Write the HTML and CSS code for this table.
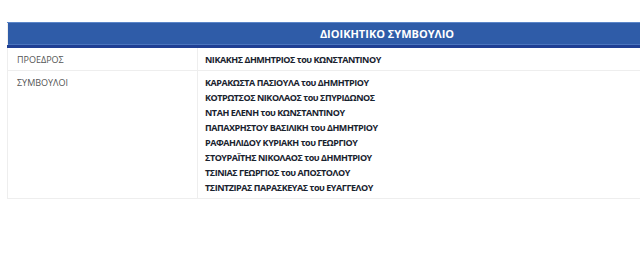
FILE: index.html
```html
<!DOCTYPE html>
<html>
<head>
  <meta charset="UTF-8">
  <title>Διοικητικό Συμβούλιο</title>
  <link rel="stylesheet" href="styles.css">
</head>
<body>
  <table class="board">
    <thead>
      <tr>
        <th colspan="2">ΔΙΟΙΚΗΤΙΚΟ ΣΥΜΒΟΥΛΙΟ</th>
      </tr>
    </thead>
    <tbody>
      <!-- Πρόεδρος -->
      <tr>
        <td class="role">ΠΡΟΕΔΡΟΣ</td>
        <td class="names">
          <div>ΝΙΚΑΚΗΣ ΔΗΜΗΤΡΙΟΣ του ΚΩΝΣΤΑΝΤΙΝΟΥ</div>
        </td>
      </tr>
      <!-- Σύμβουλοι -->
      <tr>
        <td class="role">ΣΥΜΒΟΥΛΟΙ</td>
        <td class="names">
          <div>ΚΑΡΑΚΩΣΤΑ ΠΑΣΙΟΥΛΑ του ΔΗΜΗΤΡΙΟΥ</div>
          <div>ΚΟΤΡΩΤΣΟΣ ΝΙΚΟΛΑΟΣ του ΣΠΥΡΙΔΩΝΟΣ</div>
          <div>ΝΤΑΗ ΕΛΕΝΗ του ΚΩΝΣΤΑΝΤΙΝΟΥ</div>
          <div>ΠΑΠΑΧΡΗΣΤΟΥ ΒΑΣΙΛΙΚΗ του ΔΗΜΗΤΡΙΟΥ</div>
          <div>ΡΑΦΑΗΛΙΔΟΥ ΚΥΡΙΑΚΗ του ΓΕΩΡΓΙΟΥ</div>
          <div>ΣΤΟΥΡΑΪΤΗΣ ΝΙΚΟΛΑΟΣ του ΔΗΜΗΤΡΙΟΥ</div>
          <div>ΤΣΙΝΙΑΣ ΓΕΩΡΓΙΟΣ του ΑΠΟΣΤΟΛΟΥ</div>
          <div>ΤΣΙΝΤΖΙΡΑΣ ΠΑΡΑΣΚΕΥΑΣ του ΕΥΑΓΓΕΛΟΥ</div>
        </td>
      </tr>
    </tbody>
  </table>
</body>
</html>
```

FILE: styles.css
```css
* {
  box-sizing: border-box;
}

html, body {
  margin: 0;
  padding: 0;
  overflow: hidden;
  background: #fff;
  font-family: "Open Sans", "Noto Sans", sans-serif;
}

body {
  padding: 22px 0 0 7px;
}

.board {
  width: 760px;
  border-collapse: collapse;
  border: 1px solid #eee;
}

.board th {
  height: 24px;
  padding: 0;
  background: #2f5ca8;
  border-top: 1px solid #5b86c9;
  border-bottom: 3px solid #1f3f93;
  box-shadow: inset 0 -1px 0 #4a74bd;
  color: #fff;
  font-size: 11px;
  font-weight: 700;
  line-height: 20px;
  text-align: center;
}

.board td {
  vertical-align: top;
  border: 1px solid #eee;
  padding: 4px 9px 3px;
  font-size: 9px;
  line-height: 15px;
}

.role {
  width: 190px;
  color: #555;
}

.names {
  color: #18222e;
  font-weight: 700;
  letter-spacing: -0.45px;
}

.board td.names {
  padding-left: 7px;
}
```
